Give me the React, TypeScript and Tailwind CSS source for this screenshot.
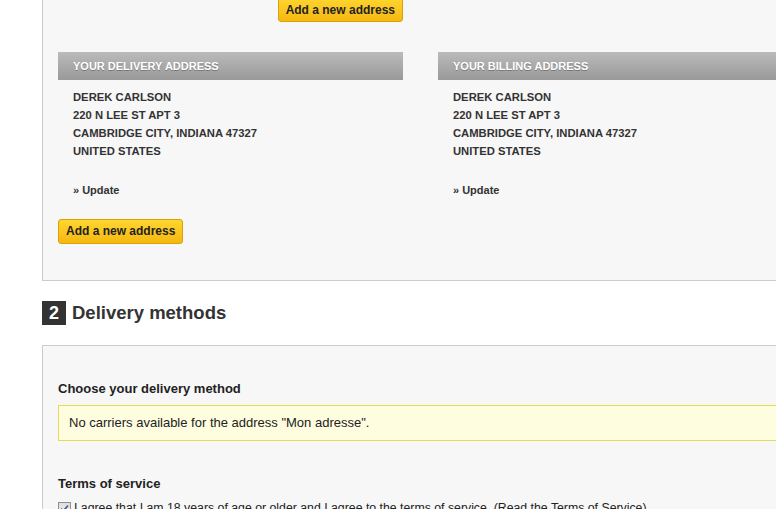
const ADDRESS = ['DEREK CARLSON', '220 N LEE ST APT 3', 'CAMBRIDGE CITY, INDIANA 47327', 'UNITED STATES'];

function YellowButton({ children }: { children: React.ReactNode }) {
  return (
    <button className="h-[25px] px-[7px] rounded-[3px] border border-[#d9a20b] bg-gradient-to-b from-[#fed62e] to-[#f5b80d] text-[12px] font-bold text-[#222] leading-none">
      {children}
    </button>
  );
}

function AddressBlock({ title }: { title: string }) {
  return (
    <div>
      <div className="h-[28px] pl-[15px] bg-gradient-to-b from-[#bbbbbb] to-[#999999] text-[11px] font-bold uppercase leading-[28px] text-white [text-shadow:0_1px_0_#777]">
        {title}
      </div>
      <div className="pl-[15px] mt-[8px] text-[11.25px] font-bold leading-[18px] text-[#333]">
        {ADDRESS.map((line) => (
          <div key={line}>{line}</div>
        ))}
        <div className="mt-[21px] text-[11px]">» Update</div>
      </div>
    </div>
  );
}

export default function App() {
  return (
    <div
      className="w-[776px] h-[509px] overflow-hidden bg-white text-[#333]"
      style={{ fontFamily: '"Liberation Sans", Arial, sans-serif' }}
    >
      <div className="pl-[42px] -mt-[20px]">
        {/* Addresses panel */}
        <div className="w-[760px] border border-[#cccccc] bg-[#f7f7f7] px-[15px] pt-[16px] pb-[36px]">
          <div className="grid grid-cols-[345px_345px] gap-x-[35px]">
            <div className="flex justify-end">
              <YellowButton>Add a new address</YellowButton>
            </div>
            <div />
          </div>
          <div className="grid grid-cols-[345px_345px] gap-x-[35px] mt-[30px]">
            <AddressBlock title="Your delivery address" />
            <AddressBlock title="Your billing address" />
          </div>
          <div className="mt-[19px]">
            <YellowButton>Add a new address</YellowButton>
          </div>
        </div>

        {/* Step 2 heading */}
        <div className="flex items-center mt-[20px] h-[24px]">
          <span className="w-[24px] h-[24px] bg-[#333] text-white text-[18px] font-bold leading-[24px] text-center">2</span>
          <h2 className="ml-[6px] text-[18.5px] font-bold text-[#333] leading-[24px]">Delivery methods</h2>
        </div>

        {/* Delivery panel */}
        <div className="mt-[20px] w-[760px] border border-[#cccccc] bg-[#f7f7f7] px-[15px] pt-[34px] pb-[30px]">
          <p className="text-[13px] font-bold leading-[18px] text-[#222]">Choose your delivery method</p>
          <div className="mt-[7px] border border-[#e6db55] bg-[#fffddf] pl-[10px] py-[8px] text-[13px] leading-[18px] text-[#222]">
            No carriers available for the address "Mon adresse".
          </div>
          <p className="mt-[34px] text-[13px] font-bold leading-[18px] text-[#222]">Terms of service</p>
          <label className="mt-[8px] flex items-start gap-[3px] text-[12.3px] leading-[15px] text-[#222] whitespace-nowrap">
            <span className="mt-[1px] w-[13px] h-[13px] shrink-0 border border-[#8e8f8f] bg-gradient-to-b from-[#dcdcdc] to-[#f5f5f5] flex items-center justify-center">
              <svg viewBox="0 0 11 11" className="w-[11px] h-[11px]">
                <path d="M2 5.5 L4.3 8 L9 2.5" fill="none" stroke="#4a5f97" strokeWidth="1.8" />
              </svg>
            </span>
            I agree that I am 18 years of age or older and I agree to the terms of service. (Read the Terms of Service)
          </label>
        </div>
      </div>
    </div>
  );
}
